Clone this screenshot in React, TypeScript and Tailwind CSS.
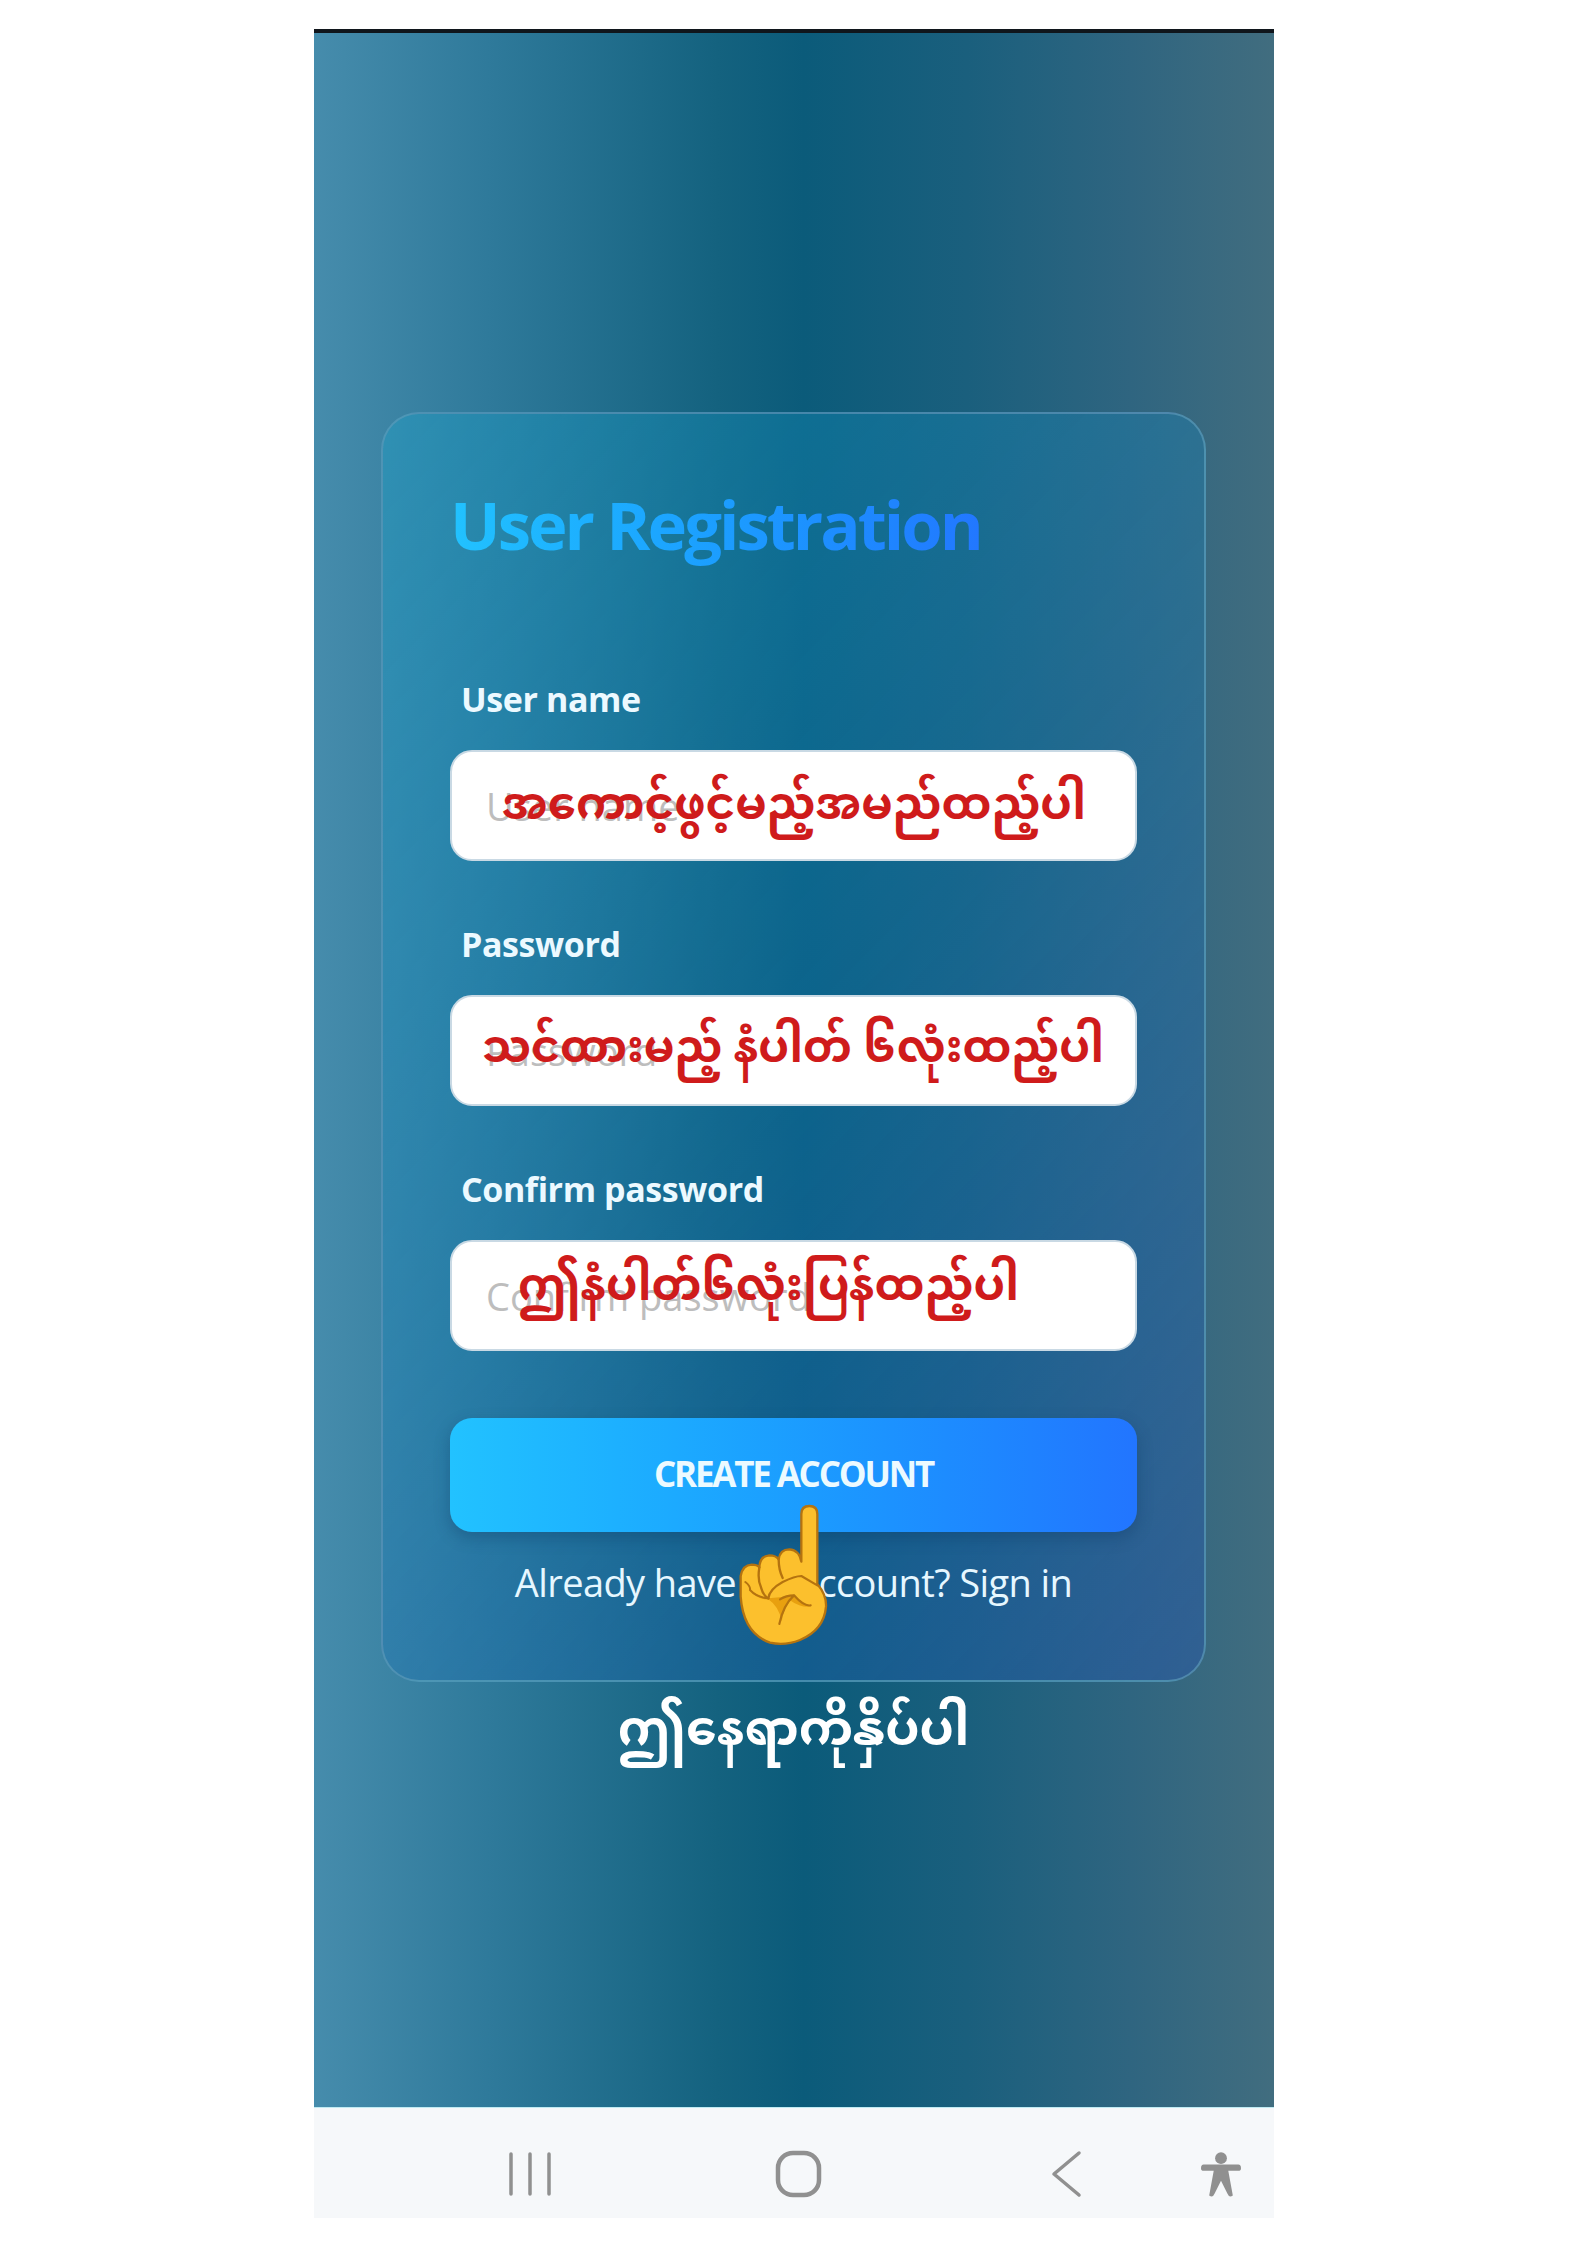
const font = { fontFamily: '"Open Sans", "Noto Sans", "Noto Sans Myanmar", "Padauk", sans-serif' };

interface FieldProps {
  label: string;
  placeholder: string;
  hint: string;
  hintClass: string;
}

function Field({ label, placeholder, hint, hintClass }: FieldProps) {
  return (
    <div className="flex flex-col">
      <label className="ml-[11px] mb-[24px] h-[52px] text-[34px] leading-[50px] font-bold tracking-[-0.4px] text-[#ecf9ff]">
        {label}
      </label>
      <div className="relative">
        <input
          readOnly
          placeholder={placeholder}
          style={font}
          className="h-[111px] w-full rounded-[22px] border-2 border-[#c9d9e4] bg-white pl-[34px] text-[38px] placeholder:text-[#bdbdbd] outline-none"
        />
        <span className={`absolute font-bold text-[#cf1b1b] whitespace-nowrap ${hintClass}`}>{hint}</span>
      </div>
    </div>
  );
}

function PointingHand() {
  return (
    <svg viewBox="0 0 480 540" className="absolute left-[700px] top-[1490px] w-[160px] h-[180px]">
      <path
        d="M304 72Q304 48 328 48Q352 48 352 72L352 282Q380 315 378 350Q372 420 300 450Q255 468 210 458Q130 430 122 320L122 258Q128 225 155 224Q172 224 178 232Q180 198 208 196Q228 196 236 208Q240 178 268 178Q298 180 304 215Z"
        fill="#fcc02d"
        stroke="#b5730f"
        strokeWidth="7"
        strokeLinejoin="round"
      />
      <path d="M150 298Q170 318 205 325L280 318L330 350Q300 352 272 332Q250 355 245 395Q238 350 205 328Q170 330 150 298Z" fill="#e8a00f" />
      <path d="M178 232Q172 270 183 292Q190 318 205 325M236 208Q236 240 248 264" fill="none" stroke="#b5730f" strokeWidth="7" strokeLinecap="round" />
      <path d="M136 276Q152 288 150 300Q170 322 205 325" fill="none" stroke="#b5730f" strokeWidth="6" strokeLinecap="round" />
      <path d="M205 325Q208 298 248 276Q285 258 304 258L352 286M240 328Q258 316 282 316Q312 350 332 346M282 316Q250 345 238 402" fill="none" stroke="#b5730f" strokeWidth="6.5" strokeLinecap="round" strokeLinejoin="round" />
    </svg>
  );
}

export default function App() {
  return (
    <div style={font} className="relative min-h-[2245px] w-[1587px] bg-white pt-[29px]">
      <div className="mx-auto w-[960px]">
        <div className="h-[4px] bg-[#10161c]" />
        <main className="flex h-[2074px] flex-col items-center bg-[linear-gradient(90deg,#468cac_0%,#2f7a9b_18%,#14627f_42%,#0b5b7a_51%,#1a5f7d_68%,#2f6580_85%,#416d7f_100%)] pt-[379px]">
          <section className="flex h-[1270px] w-[825px] flex-col rounded-[38px] border-2 border-[#5d9ab8]/70 bg-[linear-gradient(135deg,rgba(25,165,205,0.36)_0%,rgba(15,125,190,0.26)_50%,rgba(40,85,170,0.45)_100%)] px-[67px] pt-[68px]">
            <h1 className="h-[84px] w-fit bg-gradient-to-r from-[#22c2ff] to-[#2277ff] bg-clip-text text-[67px] leading-[84px] font-bold tracking-[-3px] text-transparent">
              User Registration
            </h1>
            <div className="mt-[108px] flex flex-col gap-[58px]">
              <Field
                label="User name"
                placeholder="User name"
                hint="အကောင့်ဖွင့်မည့်အမည်ထည့်ပါ"
                hintClass="left-[52px] top-[18px] text-[45px]"
              />
              <Field
                label="Password"
                placeholder="Password"
                hint="သင်ထားမည့် နံပါတ် ၆လုံးထည့်ပါ"
                hintClass="left-[32px] top-[17px] text-[44px]"
              />
              <Field
                label="Confirm password"
                placeholder="Confirm password"
                hint="ဤနံပါတ်၆လုံးပြန်ထည့်ပါ"
                hintClass="left-[68px] top-[9px] text-[45px]"
              />
            </div>
            <button className="mt-[67px] h-[114px] rounded-[22px] bg-gradient-to-r from-[#22c2ff] to-[#2275ff] pb-[2px] text-[35px] font-bold tracking-[-2.2px] text-[#ecfaff] shadow-[0_6px_16px_rgba(10,50,90,0.3)]">
              CREATE ACCOUNT
            </button>
            <p className="mt-[24px] text-center text-[38px] leading-[52px] tracking-[-0.6px] text-[#e6f7ff]">
              Already have an account? Sign in
            </p>
          </section>
          <p className="mt-[6px] text-[49px] font-bold leading-[76px] text-white">ဤနေရာကိုနှိပ်ပါ</p>
        </main>
        <nav className="flex h-[111px] items-center bg-[#f6f8fa] pt-[22px] border-t border-[#bfeaf2]">
          <svg viewBox="0 0 44 46" className="ml-[194px] h-[46px] w-[44px]" fill="none" stroke="#909090" strokeWidth="3.5" strokeLinecap="round">
            <path d="M3 3V43M22 3V43M41 3V43" />
          </svg>
          <svg viewBox="0 0 47 48" className="ml-[223px] h-[48px] w-[47px]" fill="none" stroke="#909090" strokeWidth="4.5">
            <rect x="3" y="3" width="41" height="42" rx="15" />
          </svg>
          <svg viewBox="0 0 32 48" className="ml-[228px] h-[48px] w-[32px]" fill="none" stroke="#909090" strokeWidth="3.5" strokeLinecap="round" strokeLinejoin="round">
            <path d="M29 3L4 24L29 45" />
          </svg>
          <svg viewBox="0 0 44 50" className="ml-[119px] h-[51px] w-[40px]" fill="#909090">
            <circle cx="22" cy="7" r="6.5" />
            <path d="M3 14H41Q44 14 44 18Q44 21 41 21H30L35 48Q31 51 29 46L22 32L15 46Q13 51 9 48L14 21H3Q0 21 0 18Q0 14 3 14Z" />
          </svg>
        </nav>
      </div>
      <PointingHand />
    </div>
  );
}
